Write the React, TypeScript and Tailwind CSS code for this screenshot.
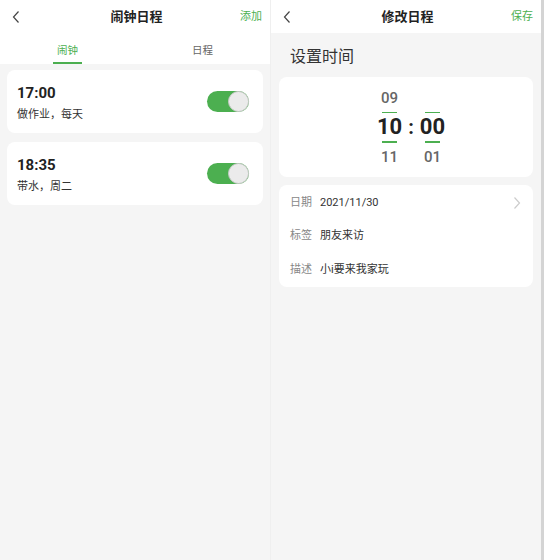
import React, { useState } from 'react';

const font = { fontFamily: "Roboto, 'Noto Sans CJK SC', sans-serif" };

const Toggle: React.FC<{ on: boolean; onClick: () => void }> = ({ on, onClick }) => (
  <button
    onClick={onClick}
    className={`flex h-[21px] w-[42px] items-center rounded-full p-0 ${on ? 'justify-end bg-[#4caf50]' : 'justify-start bg-[#d9d9d9]'}`}
  >
    <span className="h-[21px] w-[21px] rounded-full border border-[#c9c9c9] bg-[#ebebeb]" />
  </button>
);

const Chevron: React.FC<{ dir: 'left' | 'right'; className?: string }> = ({ dir, className }) => (
  <svg width="10" height="14" viewBox="0 0 10 14" className={className} fill="none" stroke="currentColor" strokeWidth="1.2">
    {dir === 'left' ? <path d="M7.5 1.5 L2.5 7 L7.5 12.5" /> : <path d="M2.5 1.5 L7.5 7 L2.5 12.5" />}
  </svg>
);

const Header: React.FC<{ title: string; action: string }> = ({ title, action }) => (
  <div className="flex h-[33px] items-center bg-white pl-[11px] pr-[8px]">
    <div className="flex flex-1 items-center">
      <Chevron dir="left" className="text-[#444]" />
    </div>
    <span className="text-[13px] font-bold leading-[18px] text-[#222]">{title}</span>
    <div className="flex flex-1 items-center justify-end">
      <span className="text-[11px] leading-[18px] text-[#4caf50]">{action}</span>
    </div>
  </div>
);

const alarms = [
  { time: '17:00', note: '做作业，每天' },
  { time: '18:35', note: '带水，周二' },
];

const AlarmList: React.FC = () => {
  const [states, setStates] = useState<boolean[]>([true, true]);
  const [tab, setTab] = useState<'alarm' | 'schedule'>('alarm');

  return (
    <div className="flex h-[560px] w-[270px] flex-col bg-[#f5f5f5]">
      <Header title="闹钟日程" action="添加" />
      <div className="flex h-[31px] bg-white">
        <button onClick={() => setTab('alarm')} className="flex flex-1 flex-col items-center justify-end">
          <span className={`text-[10.5px] ${tab === 'alarm' ? 'text-[#4caf50]' : 'text-[#666]'}`}>闹钟</span>
          <span className={`mt-[3px] h-[2px] w-[29px] ${tab === 'alarm' ? 'bg-[#4caf50]' : 'bg-transparent'}`} />
        </button>
        <button onClick={() => setTab('schedule')} className="flex flex-1 flex-col items-center justify-end">
          <span className={`text-[10.5px] ${tab === 'schedule' ? 'text-[#4caf50]' : 'text-[#666]'}`}>日程</span>
          <span className={`mt-[3px] h-[2px] w-[29px] ${tab === 'schedule' ? 'bg-[#4caf50]' : 'bg-transparent'}`} />
        </button>
      </div>
      <div className="flex flex-col gap-[9px] px-[7px] pt-[6px]">
        {alarms.map((a, i) => (
          <div key={a.time} className="flex h-[63px] items-center justify-between rounded-[8px] bg-white pl-[10px] pr-[14px]">
            <div className="flex flex-col pt-[2px]">
              <span className="text-[15px] font-bold leading-[18px] text-[#222]">{a.time}</span>
              <span className="mt-[6px] text-[11px] leading-[14px] text-[#333]">{a.note}</span>
            </div>
            <Toggle on={states[i]} onClick={() => setStates(s => s.map((v, j) => (j === i ? !v : v)))} />
          </div>
        ))}
      </div>
    </div>
  );
};

const EditSchedule: React.FC = () => {
  return (
    <div className="flex h-[560px] w-[270px] flex-col bg-[#f5f5f5]">
      <Header title="修改日程" action="保存" />
      <div className="px-[8px]">
        <div className="flex h-[44px] items-center pl-[11px] pt-[3px] text-[16px] text-[#333]">设置时间</div>
        <div className="flex h-[100px] items-center justify-center rounded-[8px] bg-white">
          <div className="flex items-center gap-[6px] pl-[10px]">
            <div className="flex flex-col items-center">
              <span className="text-[15px] font-medium leading-[20px] text-[#666]">09</span>
              <span className="mt-[4px] h-[1.5px] w-[15px] bg-[#4caf50]" />
              <span className="py-[1px] text-[22px] font-bold leading-[26px] text-[#222]">10</span>
              <span className="h-[1.5px] w-[15px] bg-[#4caf50]" />
              <span className="mt-[4px] text-[15px] font-medium leading-[20px] text-[#666]">11</span>
            </div>
            <span className="text-[20px] font-bold text-[#222]">:</span>
            <div className="flex flex-col items-center">
              <span className="text-[15px] leading-[20px] text-transparent">00</span>
              <span className="mt-[4px] h-[1.5px] w-[15px] bg-[#4caf50]" />
              <span className="py-[1px] text-[22px] font-bold leading-[26px] text-[#222]">00</span>
              <span className="h-[1.5px] w-[15px] bg-[#4caf50]" />
              <span className="mt-[4px] text-[15px] font-medium leading-[20px] text-[#666]">01</span>
            </div>
          </div>
        </div>
        <div className="mt-[8px] flex flex-col rounded-[8px] bg-white px-[11px] pt-[1px]">
          {[
            { label: '日期', value: '2021/11/30', arrow: true },
            { label: '标签', value: '朋友来访' },
            { label: '描述', value: '小i要来我家玩' },
          ].map(r => (
            <div key={r.label} className="flex h-[33.5px] items-center">
              <span className="text-[11px] text-[#888]">{r.label}</span>
              <span className="ml-[8px] flex-1 text-[11px] text-[#333]">{r.value}</span>
              {r.arrow && <Chevron dir="right" className="text-[#ccc]" />}
            </div>
          ))}
        </div>
      </div>
    </div>
  );
};

export default function App() {
  return (
    <div className="flex h-[560px] w-[544px] bg-[#f5f5f5]" style={font}>
      <AlarmList />
      <div className="w-[1px] bg-[#efefef]" />
      <EditSchedule />
      <div className="w-[3px] bg-[#d4d4d4]" />
    </div>
  );
}
